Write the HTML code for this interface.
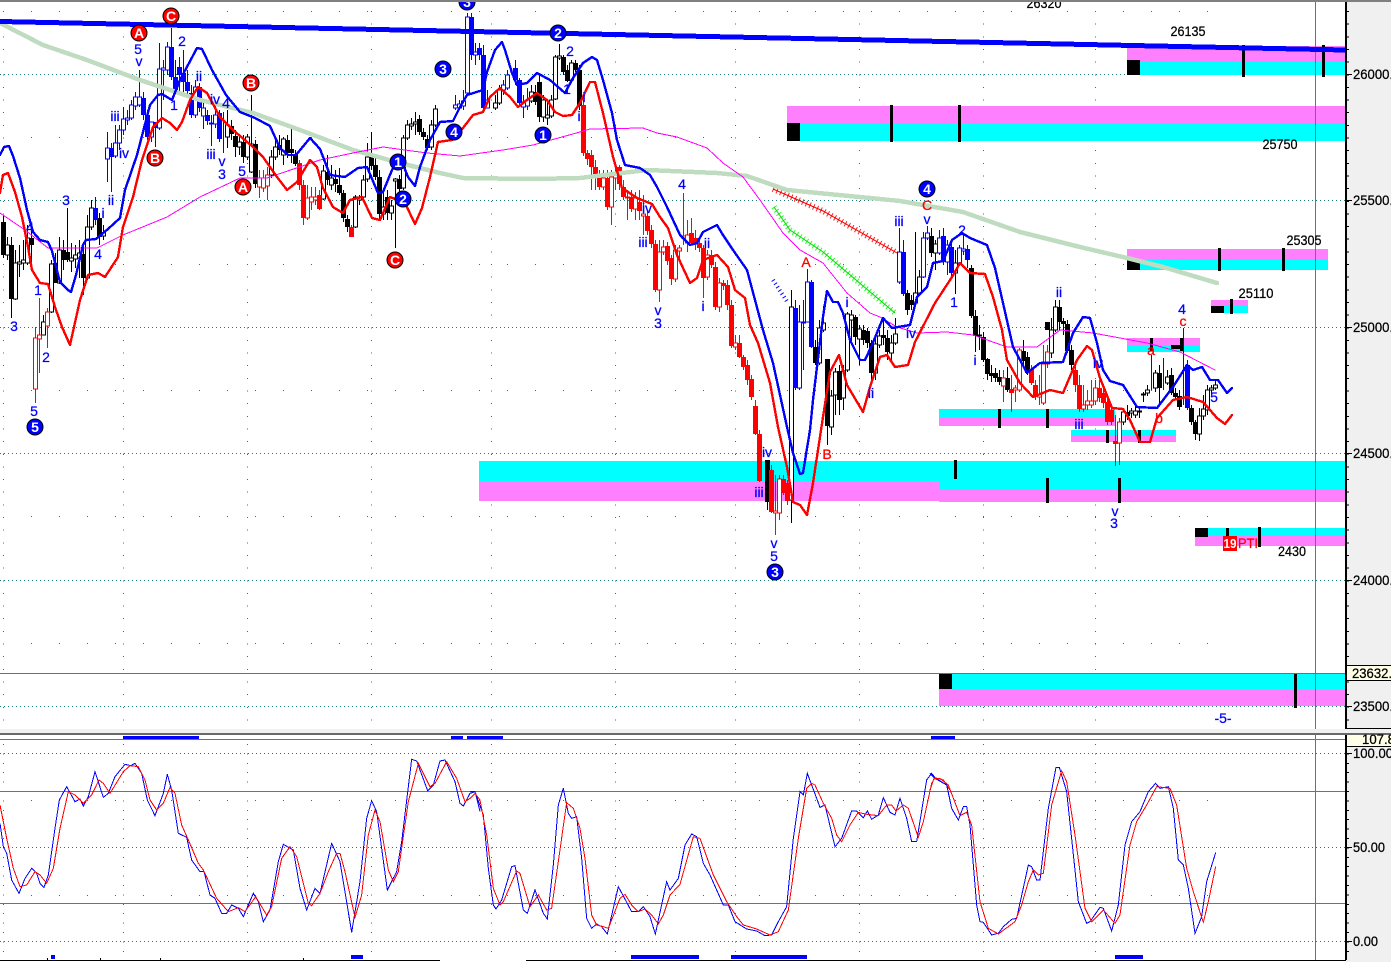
<!DOCTYPE html>
<html><head><meta charset="utf-8"><title>Chart</title>
<style>
html,body{margin:0;padding:0;background:#fff;overflow:hidden}
svg{display:block}
text{font-family:"Liberation Sans",Arial,sans-serif;font-size:14px}
.b{fill:#0000ff;stroke:#0000ff;stroke-width:.25;text-anchor:middle}
.r{fill:#ff0000;stroke:#ff0000;stroke-width:.3;text-anchor:middle}
.k{fill:#000;stroke:#000;stroke-width:.25;text-anchor:middle}
.a{fill:#000;stroke:#000;stroke-width:.25}
.w{fill:#fff;text-anchor:middle;font-weight:bold;font-size:13px}
.c{shape-rendering:crispEdges}
.p{fill:none;stroke-linejoin:round;stroke-linecap:round}
</style></head><body>
<svg width="1391" height="962" viewBox="0 0 1391 962" xmlns="http://www.w3.org/2000/svg">
<rect width="1391" height="962" fill="#fff"/>
<!-- grid -->
<g class="c" fill="none" stroke="#1f7a7a">
<path stroke-dasharray="1 3" d="M0 74.5H1345M0 200.5H1345M0 327.5H1345M0 453.5H1345M0 580.5H1345M0 706.5H1345M0 753.5H1345M0 847.5H1345M0 941.5H1345"/>
<path stroke-dasharray="1 27" d="M31 11.5H1215M31 137.5H1215M31 264.5H1215M31 390.5H1215M31 516.5H1215M31 643.5H1215M31 800.5H1215M31 895.5H1215"/>
<path stroke-dasharray="1 11.65" d="M3.5 11V728M123.5 11V728M247.5 11V728M371.5 11V728M491.5 11V728M615.5 11V728M735.5 11V728M859.5 11V728M983.5 11V728M1095.5 11V728"/>
<path stroke-dasharray="1 8.4" d="M3.5 744V957M123.5 744V957M247.5 744V957M371.5 744V957M491.5 744V957M615.5 744V957M735.5 744V957M859.5 744V957M983.5 744V957M1095.5 744V957"/>
</g>
<!-- bands -->
<g class="c">
<rect x="1127" y="46" width="218" height="15" fill="#ff80ff"/><rect x="1127" y="61" width="218" height="14" fill="#0ff"/><rect x="1127" y="60" width="13" height="15" fill="#000"/>
<rect x="787" y="106" width="558" height="18" fill="#ff80ff"/><rect x="787" y="124" width="558" height="17" fill="#0ff"/><rect x="787" y="123" width="13" height="18" fill="#000"/>
<rect x="1127" y="249" width="201" height="11" fill="#ff80ff"/><rect x="1127" y="260" width="201" height="10" fill="#0ff"/><rect x="1127" y="259" width="13" height="11" fill="#000"/>
<rect x="1211" y="300" width="37" height="6" fill="#ff80ff"/><rect x="1211" y="306" width="37" height="7" fill="#0ff"/><rect x="1211" y="306" width="13" height="7" fill="#000"/>
<rect x="1127" y="338" width="73" height="7" fill="#ff80ff"/><rect x="1127" y="345" width="73" height="7" fill="#0ff"/><rect x="1171" y="345" width="11" height="4" fill="#000"/>
<rect x="939" y="409" width="176" height="8" fill="#0ff"/><rect x="939" y="417" width="176" height="9" fill="#ff80ff"/>
<rect x="1071" y="430" width="105" height="6" fill="#0ff"/><rect x="1071" y="436" width="105" height="6" fill="#ff80ff"/>
<rect x="479" y="461" width="460" height="20" fill="#0ff"/><rect x="479" y="481" width="460" height="20" fill="#ff80ff"/>
<rect x="939" y="461" width="406" height="29" fill="#0ff"/><rect x="939" y="490" width="406" height="12" fill="#ff80ff"/>
<rect x="1195" y="528" width="150" height="8" fill="#0ff"/><rect x="1195" y="536" width="150" height="10" fill="#ff80ff"/><rect x="1195" y="528" width="13" height="9" fill="#000"/>
<rect x="939" y="673" width="406" height="16" fill="#0ff"/><rect x="939" y="689" width="406" height="17" fill="#ff80ff"/><rect x="939" y="673" width="13" height="16" fill="#000"/>
<path fill="none" stroke="#000" stroke-width="3" d="M1243.5 45V77M1323.5 45V77M891.5 105V142M959.5 105V142M1219.5 248V271M1283.5 248V271M1231.5 299V314M1151.5 338V351M1181.5 338V351M999.5 409V428M1047.5 409V428M1107.5 430V443M1139.5 430V443M955.5 460V479M1047.5 478V503M1119.5 478V503M1227.5 528V537M1259.5 527V547M1295.5 673V708"/>
</g>
<!-- olive lines -->
<g class="c" fill="none" stroke="#808000"><path d="M1315.5 2V960M0 673.5H1345M0 739.5H1345M0 791.5H1345M0 903.5H1345"/></g>
<!-- black candles -->
<g class="c" fill="none" stroke="#000">
<path d="M3.5 215V258M7.5 237V260M11.5 237V318M15.5 250V300M19.5 245V277M23.5 240V270M27.5 225V265M31.5 225V265M43.5 315V335M51.5 260V313M55.5 253V283M59.5 237V284M63.5 240V270M67.5 208V262M71.5 243V272M75.5 245V268M79.5 240V278M83.5 243V295M87.5 215V280M91.5 200V230M99.5 213V245M103.5 225V240M227.5 110V148M231.5 120V140M235.5 130V157M239.5 135V155M243.5 135V163M247.5 134V160M251.5 95V173M255.5 140V188M271.5 150V178M275.5 140V160M279.5 135V155M283.5 137V165M287.5 135V158M291.5 128V163M295.5 150V166M323.5 165V200M327.5 155V185M331.5 165V190M335.5 170V192M339.5 168V195M343.5 190V222M347.5 215V232M355.5 195V228M359.5 195V205M363.5 175V198M367.5 143V182M371.5 132V170M375.5 155V180M379.5 170V220M383.5 190V220M387.5 190V220M391.5 200V220M395.5 178V248M399.5 175V195M403.5 135V190M407.5 120V140M411.5 118V130M415.5 112V135M419.5 115V135M423.5 128V140M427.5 135V150M431.5 120V150M435.5 105V127M495.5 95V110M499.5 85V105M531.5 85V103M535.5 85V105M539.5 75V122M543.5 95V122M547.5 100V125M551.5 95V118M555.5 55V100M559.5 44V60M563.5 55V75M567.5 65V82M571.5 60V82M575.5 60V72M579.5 65V110M767.5 460V510M791.5 290V523M815.5 340V365M819.5 320V365M823.5 306V332M827.5 359V445M831.5 390V435M835.5 368V415M839.5 365V415M843.5 365V410M847.5 312V372M851.5 310V345M855.5 315V345M859.5 325V365M863.5 325V345M867.5 328V348M871.5 340V385M875.5 335V380M879.5 330V348M883.5 318V345M887.5 330V360M891.5 335V360M895.5 318V345M907.5 290V315M911.5 295V310M915.5 232V305M919.5 270V295M931.5 228V257M935.5 240V270M955.5 250V294M971.5 265V318M975.5 310V352M979.5 325V350M983.5 332V362M987.5 358V380M991.5 365V382M995.5 368V382M999.5 370V385M1007.5 367V392M1023.5 340V365M1027.5 352V375M1051.5 318V358M1055.5 300V332M1059.5 300V330M1063.5 318V335M1067.5 320V353M1071.5 345V370M1123.5 408V425M1127.5 405V420M1131.5 408V418M1135.5 405V418M1139.5 408V418M1143.5 392V402M1147.5 385V396M1155.5 370V392M1159.5 365V405M1167.5 370V385M1171.5 368V395M1175.5 388V400M1179.5 390V410M1191.5 405V425M1195.5 420V440M1199.5 408V441M1203.5 395V420M1207.5 385V415M1211.5 385V395M1215.5 380V390"/>
<path fill="#fff" d="M5.5 245h4V255h-4zM13.5 263h4V299h-4zM17.5 262h4V264h-4zM21.5 260h4V263h-4zM25.5 238h4V263h-4zM41.5 322h4V335h-4zM49.5 264h4V312h-4zM57.5 250h4V283h-4zM69.5 258h4V261h-4zM73.5 255h4V259h-4zM77.5 253h4V258h-4zM85.5 227h4V278h-4zM89.5 208h4V227h-4zM101.5 233h4V236h-4zM225.5 125h4V137h-4zM237.5 142h4V147h-4zM245.5 137h4V157h-4zM249.5 144h4V172h-4zM269.5 157h4V175h-4zM273.5 147h4V157h-4zM281.5 139h4V155h-4zM321.5 171h4V199h-4zM329.5 178h4V185h-4zM353.5 197h4V227h-4zM357.5 198h4V200h-4zM361.5 180h4V197h-4zM365.5 157h4V179h-4zM381.5 207h4V214h-4zM389.5 206h4V213h-4zM393.5 179h4V181h-4zM401.5 138h4V188h-4zM405.5 125h4V138h-4zM409.5 124h4V126h-4zM413.5 122h4V124h-4zM429.5 125h4V147h-4zM433.5 109h4V125h-4zM493.5 103h4V108h-4zM497.5 90h4V103h-4zM529.5 92h4V101h-4zM541.5 100h4V117h-4zM545.5 115h4V118h-4zM549.5 100h4V116h-4zM553.5 57h4V99h-4zM557.5 56h4V58h-4zM569.5 63h4V80h-4zM789.5 307h4V500h-4zM817.5 328h4V363h-4zM821.5 323h4V330h-4zM829.5 396h4V427h-4zM833.5 372h4V395h-4zM841.5 371h4V398h-4zM845.5 314h4V370h-4zM849.5 315h4V320h-4zM857.5 329h4V339h-4zM873.5 344h4V373h-4zM877.5 336h4V345h-4zM889.5 343h4V353h-4zM893.5 334h4V343h-4zM913.5 293h4V303h-4zM917.5 277h4V293h-4zM933.5 244h4V253h-4zM953.5 263h4V273h-4zM977.5 335h4V336h-4zM1049.5 330h4V353h-4zM1053.5 307h4V330h-4zM1121.5 412h4V422h-4zM1129.5 411h4V413h-4zM1133.5 411h4V415h-4zM1137.5 411h4V412h-4zM1141.5 394h4V395h-4zM1145.5 390h4V393h-4zM1153.5 373h4V388h-4zM1165.5 377h4V383h-4zM1197.5 416h4V434h-4zM1201.5 409h4V416h-4zM1205.5 390h4V410h-4zM1209.5 388h4V390h-4zM1213.5 385h4V388h-4z"/>
<path stroke-width="5" d="M3.5 222V255M11.5 245V299M31.5 238V245M55.5 263V283M63.5 250V260M67.5 252V260M83.5 254V278M99.5 218V237M231.5 126V134M235.5 136V147M243.5 142V157M255.5 144V184M279.5 145V150M287.5 140V153M291.5 149V153M295.5 154V164M327.5 172V180M335.5 179V184M339.5 185V193M343.5 193V218M347.5 219V227M371.5 157V166M375.5 165V177M379.5 177V214M387.5 197V213M399.5 179V189M419.5 119V132M423.5 132V137M427.5 139V148M535.5 92V102M539.5 82V117M563.5 57V72M567.5 70V81M575.5 63V70M579.5 70V106M767.5 460V502M815.5 347V363M827.5 359V426M839.5 371V400M855.5 317V337M863.5 330V340M867.5 331V343M871.5 343V373M883.5 335V338M887.5 338V352M907.5 293V310M911.5 300V305M931.5 236V253M971.5 268V316M975.5 316V336M983.5 337V360M987.5 359V374M991.5 373V376M995.5 373V378M999.5 377V382M1007.5 378V390M1023.5 351V361M1027.5 357V373M1047.5 322V330M1059.5 307V322M1063.5 321V324M1067.5 324V351M1071.5 350V365M1127.5 412V416M1159.5 373V388M1171.5 375V393M1175.5 393V397M1179.5 396V407M1191.5 408V422M1195.5 422V434"/>
</g>
<!-- blue candles -->
<g class="c" fill="none" stroke="#0000ff">
<path d="M95.5 197V225M107.5 132V182M111.5 143V192M115.5 125V158M119.5 125V150M123.5 107V135M127.5 110V125M131.5 100V120M135.5 92V110M139.5 70V107M143.5 92V120M147.5 110V140M151.5 122V142M155.5 122V147M159.5 43V130M163.5 60V100M167.5 42V75M171.5 28V80M175.5 60V93M179.5 57V93M183.5 50V95M187.5 70V95M191.5 85V118M195.5 80V118M199.5 83V112M203.5 100V129M207.5 110V125M211.5 115V146M215.5 105V128M219.5 110V142M223.5 112V153M455.5 95V110M459.5 100V110M463.5 90V110M467.5 13V95M471.5 13V60M475.5 43V65M479.5 43V60M483.5 45V110M487.5 90V108M503.5 80V95M507.5 70V90M515.5 60V85M519.5 78V105M523.5 95V118M527.5 88V110M795.5 300V390M799.5 305V390M803.5 300V370M807.5 269V322M811.5 280V348M899.5 228V284M903.5 240V296M923.5 232V278M927.5 226V240M939.5 230V255M943.5 228V265M947.5 240V275M951.5 240V277M959.5 245V265M963.5 235V255M967.5 245V268M1151.5 355V390M1163.5 358V390M1183.5 328V405M1187.5 360V410"/>
<path fill="#fff" d="M105.5 148h4V159h-4zM113.5 143h4V156h-4zM117.5 130h4V143h-4zM121.5 119h4V130h-4zM125.5 118h4V120h-4zM129.5 105h4V118h-4zM133.5 97h4V106h-4zM137.5 97h4V105h-4zM149.5 122h4V137h-4zM157.5 69h4V128h-4zM161.5 68h4V70h-4zM165.5 47h4V70h-4zM193.5 87h4V115h-4zM201.5 108h4V116h-4zM209.5 123h4V124h-4zM213.5 115h4V124h-4zM453.5 105h4V108h-4zM457.5 104h4V108h-4zM461.5 101h4V106h-4zM465.5 17h4V93h-4zM473.5 52h4V55h-4zM485.5 100h4V108h-4zM501.5 85h4V90h-4zM505.5 75h4V88h-4zM521.5 102h4V107h-4zM525.5 100h4V106h-4zM797.5 322h4V388h-4zM801.5 322h4V323h-4zM805.5 282h4V322h-4zM897.5 252h4V282h-4zM921.5 238h4V277h-4zM925.5 233h4V238h-4zM937.5 238h4V253h-4zM945.5 245h4V262h-4zM957.5 248h4V263h-4zM961.5 249h4V251h-4z"/>
<path stroke-width="5" d="M95.5 208V220M111.5 148V157M143.5 98V115M147.5 115V137M155.5 122V128M171.5 47V77M175.5 77V90M179.5 67V75M183.5 73V82M187.5 82V91M191.5 93V115M199.5 87V108M207.5 115V121M219.5 113V139M471.5 17V55M479.5 48V55M483.5 55V108M515.5 68V80M519.5 80V103M795.5 308V388M811.5 282V347M903.5 252V294M943.5 236V262M951.5 247V273M967.5 249V260M1187.5 365V408"/>
</g>
<!-- red candles -->
<g class="c" fill="none" stroke="#ff0000">
<path d="M35.5 327V403M39.5 298V373M47.5 308V348M259.5 170V198M263.5 170V192M267.5 167V200M299.5 160V190M303.5 180V225M307.5 185V220M311.5 187V210M315.5 187V205M319.5 190V210M351.5 225V237M583.5 100V156M587.5 150V165M591.5 150V190M595.5 160V190M599.5 170V190M603.5 170V190M607.5 170V210M611.5 170V225M615.5 165V190M619.5 165V190M623.5 180V200M627.5 190V220M631.5 190V212M635.5 192V220M639.5 190V220M643.5 195V235M647.5 210V235M651.5 225V248M655.5 240V292M659.5 240V302M663.5 240V255M667.5 242V265M671.5 255V285M675.5 245V282M679.5 245V262M683.5 193V245M687.5 220V252M691.5 218V245M695.5 230V250M699.5 238V252M703.5 245V298M707.5 250V280M711.5 250V268M715.5 262V310M719.5 278V312M723.5 280V290M727.5 280V310M731.5 300V348M735.5 335V350M739.5 335V358M743.5 355V370M747.5 360V385M751.5 375V400M755.5 400V435M759.5 430V482M771.5 465V513M775.5 475V535M779.5 475V520M783.5 475V495M787.5 480V505M1003.5 370V402M1011.5 375V412M1015.5 385V402M1019.5 348V392M1031.5 365V385M1035.5 380V400M1039.5 375V405M1043.5 345V405M1047.5 345V368M1075.5 365V392M1079.5 375V412M1083.5 385V412M1087.5 390V410M1091.5 380V408M1095.5 380V405M1099.5 380V402M1103.5 388V408M1107.5 398V425M1111.5 405V425M1115.5 415V466M1119.5 418V465"/>
<path fill="#fff" d="M33.5 338h4V389h-4zM37.5 335h4V339h-4zM45.5 312h4V326h-4zM257.5 178h4V187h-4zM261.5 178h4V188h-4zM265.5 175h4V186h-4zM305.5 198h4V218h-4zM309.5 197h4V202h-4zM313.5 197h4V200h-4zM601.5 178h4V187h-4zM609.5 177h4V207h-4zM613.5 175h4V178h-4zM625.5 197h4V198h-4zM633.5 198h4V209h-4zM641.5 214h4V216h-4zM657.5 252h4V290h-4zM661.5 247h4V252h-4zM673.5 250h4V279h-4zM677.5 248h4V251h-4zM681.5 236h4V238h-4zM685.5 235h4V243h-4zM705.5 255h4V277h-4zM717.5 283h4V307h-4zM733.5 343h4V347h-4zM773.5 511h4V513h-4zM777.5 479h4V513h-4zM1001.5 378h4V386h-4zM1013.5 388h4V390h-4zM1017.5 350h4V390h-4zM1037.5 394h4V397h-4zM1041.5 364h4V403h-4zM1045.5 352h4V364h-4zM1081.5 405h4V409h-4zM1085.5 401h4V405h-4zM1089.5 401h4V405h-4zM1093.5 388h4V401h-4zM1117.5 422h4V443h-4z"/>
<path stroke-width="5" d="M299.5 163V185M303.5 185V218M319.5 195V209M351.5 227V237M583.5 105V153M587.5 153V159M591.5 155V167M595.5 167V177M599.5 176V187M607.5 178V207M619.5 167V184M623.5 187V197M631.5 197V209M639.5 202V211M647.5 216V231M651.5 230V244M655.5 244V290M667.5 246V261M671.5 258V279M691.5 233V243M695.5 238V243M699.5 243V248M703.5 248V278M711.5 255V265M715.5 267V307M723.5 283V286M727.5 285V305M731.5 305V346M739.5 343V357M743.5 357V367M747.5 365V380M751.5 379V397M755.5 406V434M759.5 434V481M771.5 470V512M783.5 479V493M787.5 483V501M1011.5 389V393M1031.5 369V383M1035.5 385V397M1075.5 370V385M1079.5 385V409M1099.5 388V398M1103.5 393V403M1107.5 402V422M1111.5 410V422M1115.5 441V444"/>
</g>
<!-- trend marks -->
<path fill="none" stroke="#ff2020" stroke-width="6" stroke-dasharray="1 3" d="M773 189L823 211L897 253"/>
<path fill="none" stroke="#e00" stroke-width="1" d="M773 189L823 211L897 253"/>
<path fill="none" stroke="#20ff20" stroke-width="6" stroke-dasharray="1 3" d="M774 207L790 230L823 252L895 313"/>
<path fill="none" stroke="#10d010" stroke-width="1" d="M774 207L790 230L823 252L895 313"/>
<path fill="none" stroke="#0000ff" stroke-width="4" stroke-dasharray="1 3" d="M773 280L788 303"/>
<!-- green MA -->
<polyline class="p c" stroke="#c0dcc0" stroke-width="4.5" points="0,23 43,45 87,60 140,80 200,100 253,113 300,130 353,150 400,163 440,173 463,178 533,179 580,178 647,170 717,173 747,176 787,190 880,199 900,201 963,212 1020,232 1080,247 1127,258 1163,267 1217,283"/>
<!-- magenta MA -->
<polyline class="p c" stroke="#ff00ff" stroke-width="1" points="0,213 25,230 48,248 97,248 123,235 167,217 200,197 240,178 267,178 320,160 353,153 383,147 427,153 460,156 503,150 533,145 580,132 590,129 643,128 657,133 677,137 707,148 723,163 743,177 760,200 783,233 800,250 823,263 847,293 870,313 880,317 897,327 917,333 947,332 973,335 1007,347 1037,347 1060,330 1093,333 1147,343 1180,352 1215,370"/>
<!-- red band -->
<polyline class="p c" stroke="#ff0000" stroke-width="2.4" points="0,193 3,175 8,173 15,192 22,217 28,247 32,270 40,283 48,284 55,307 62,327 70,345 80,300 88,275 98,273 105,277 118,257 123,227 133,197 142,160 153,127 162,118 170,123 177,130 182,122 190,100 198,87 207,93 220,117 233,130 253,147 263,157 277,177 287,190 297,182 310,160 317,167 323,188 333,207 343,213 350,200 362,197 372,218 380,220 390,197 405,203 415,224 422,208 430,177 438,142 452,140 463,128 473,115 483,112 490,97 500,88 510,97 518,107 527,100 537,93 547,100 555,112 563,116 572,115 580,103 590,82 595,82 603,113 613,157 622,188 637,198 652,204 660,217 668,228 677,255 690,283 697,278 703,260 717,255 728,267 735,290 745,298 750,325 758,343 770,383 778,427 787,467 793,502 800,505 807,515 813,483 823,417 830,372 839,355 847,385 863,412 870,387 880,357 887,355 895,367 908,365 915,342 935,303 952,277 960,263 970,273 985,274 993,297 1002,330 1007,360 1020,383 1033,397 1050,390 1063,393 1077,360 1087,346 1092,350 1100,378 1112,408 1123,409 1130,420 1140,442 1150,442 1157,418 1173,400 1187,397 1203,402 1217,418 1225,424 1232,415"/>
<!-- blue band -->
<polyline class="p c" stroke="#0000ff" stroke-width="2.4" points="0,155 4,147 9,146 13,156 20,178 27,210 33,232 40,240 48,242 52,251 60,282 68,290 71,292 76,275 83,245 86,240 96,239 108,229 120,218 125,190 137,155 150,105 158,95 162,94 172,100 180,80 197,48 202,49 212,70 226,95 240,112 255,118 270,126 280,148 288,155 296,155 310,138 320,149 330,175 345,177 358,168 367,167 378,193 383,192 392,170 400,157 408,177 415,186 420,167 430,140 440,122 453,121 460,107 467,95 483,90 487,72 495,50 502,42 505,50 512,73 517,85 527,83 537,73 550,80 565,93 573,78 583,63 592,57 597,60 603,80 612,113 617,140 625,165 640,168 650,175 657,187 667,207 680,235 690,245 697,243 703,232 717,225 723,235 733,250 747,270 763,330 773,363 787,427 793,453 800,474 803,473 810,430 813,400 823,317 827,291 833,302 838,302 843,313 850,340 860,360 865,360 872,345 883,318 892,328 910,325 917,297 927,287 933,263 943,261 952,240 962,233 970,238 987,245 995,268 1003,303 1013,347 1027,373 1040,363 1063,362 1073,333 1083,317 1090,318 1097,343 1103,370 1110,381 1123,385 1137,407 1157,408 1173,387 1187,365 1193,370 1202,367 1210,380 1218,380 1227,393 1232,388"/>
<!-- thick trendline -->
<path class="c" fill="none" stroke="#0000ff" stroke-width="5" d="M0 21.5L1345 50"/>
<!-- labels blue -->
<g class="b">
<text x="138" y="54">5</text><text x="139" y="66">v</text><text x="182" y="46">2</text><text x="199" y="81">ii</text><text x="174" y="110">1</text><text x="115" y="121">iii</text><text x="124" y="158">iv</text><text x="215" y="104">iv</text><text x="226" y="108">4</text><text x="211" y="159">iii</text><text x="222" y="166">v</text><text x="222" y="179">3</text><text x="242" y="176">5</text><text x="66" y="205">3</text><text x="103" y="218">i</text><text x="111" y="205">ii</text><text x="98" y="259">4</text><text x="38" y="295">1</text><text x="46" y="362">2</text><text x="14" y="331">3</text><text x="34" y="416">5</text><text x="30" y="232">4</text>
<text x="570" y="56">2</text><text x="584" y="102">i</text><text x="579" y="121">i</text><text x="567" y="94">1</text><text x="647" y="213">iv</text><text x="643" y="247">iii</text><text x="658" y="315">v</text><text x="658" y="328">3</text><text x="682" y="189">4</text><text x="707" y="248">ii</text><text x="703" y="311">i</text><text x="847" y="307">i</text><text x="899" y="226">iii</text><text x="927" y="224">v</text><text x="962" y="235">2</text><text x="954" y="307">1</text><text x="911" y="338">iv</text><text x="975" y="365">i</text><text x="1059" y="297">ii</text><text x="1098" y="368">iv</text><text x="1079" y="429">iii</text><text x="1182" y="314">4</text><text x="1214" y="402">5</text><text x="1115" y="516">v</text><text x="1114" y="528">3</text><text x="767" y="457">iv</text><text x="759" y="497">iii</text><text x="774" y="548">v</text><text x="774" y="561">5</text><text x="871" y="398">ii</text><text x="1223" y="723">-5-</text>
</g>
<g class="r">
<text x="927" y="210">C</text><text x="1183" y="326">c</text><text x="1151" y="355">a</text><text x="1159" y="423">b</text><text x="806" y="267">A</text><text x="827" y="459">B</text>
</g>
<g class="k">
<text x="1044" y="8" textLength="35" lengthAdjust="spacingAndGlyphs">26320</text><text x="1188" y="36" textLength="35" lengthAdjust="spacingAndGlyphs">26135</text><text x="1280" y="149" textLength="35" lengthAdjust="spacingAndGlyphs">25750</text><text x="1304" y="245" textLength="35" lengthAdjust="spacingAndGlyphs">25305</text><text x="1256" y="298" textLength="35" lengthAdjust="spacingAndGlyphs">25110</text><text x="1292" y="556" textLength="28" lengthAdjust="spacingAndGlyphs">2430</text>
</g>
<!-- 19 PTI -->
<rect class="c" x="1223" y="536" width="14" height="15" fill="#ff0000"/>
<text class="w" x="1230" y="548" textLength="13" lengthAdjust="spacingAndGlyphs">19</text>
<text x="1238" y="548" fill="#ff0000" stroke="#ff0000" stroke-width=".25" textLength="20" lengthAdjust="spacingAndGlyphs">PTI</text>
<!-- circles -->
<g fill="#0000ff" stroke="#000" stroke-width="1">
<circle cx="35" cy="427" r="8"/><circle cx="775" cy="572" r="8"/><circle cx="927" cy="189" r="8"/><circle cx="443" cy="69" r="8"/><circle cx="454" cy="132" r="8"/><circle cx="398" cy="162" r="8"/><circle cx="403" cy="199" r="8"/><circle cx="467" cy="2" r="8"/><circle cx="558" cy="33" r="8"/><circle cx="543" cy="135" r="8"/>
</g>
<g fill="#ff0000" stroke="#000" stroke-width="1">
<circle cx="139" cy="33" r="8"/><circle cx="171" cy="16" r="8"/><circle cx="155" cy="158" r="8"/><circle cx="251" cy="83" r="8"/><circle cx="243" cy="187" r="8"/><circle cx="395" cy="260" r="8"/>
</g>
<g class="w">
<text x="35" y="432">5</text><text x="775" y="577">3</text><text x="927" y="194">4</text><text x="443" y="74">3</text><text x="454" y="137">4</text><text x="398" y="167">1</text><text x="403" y="204">2</text><text x="467" y="7">3</text><text x="558" y="38">2</text><text x="543" y="140">1</text>
<text x="139" y="38">A</text><text x="171" y="21">C</text><text x="155" y="163">B</text><text x="251" y="88">B</text><text x="243" y="192">A</text><text x="395" y="265">C</text>
</g>
<!-- divider -->
<rect x="0" y="729" width="1391" height="4" fill="#f0f0f0"/>
<rect x="0" y="733" width="1391" height="2" fill="#696969"/>
<rect x="0" y="0" width="1391" height="2" fill="#808080"/>
<!-- blue markers -->
<g class="c" fill="#0000ff">
<rect x="123" y="736" width="76" height="3"/><rect x="451" y="736" width="12" height="3"/><rect x="467" y="736" width="36" height="3"/><rect x="931" y="736" width="24" height="3"/>
<rect x="51" y="955" width="4" height="4"/><rect x="351" y="955" width="12" height="4"/><rect x="631" y="955" width="68" height="4"/><rect x="731" y="955" width="76" height="4"/><rect x="1115" y="955" width="28" height="4"/>
</g>
<!-- stochastic -->
<g transform="translate(0,725) scale(.33333)" fill="none" stroke-width="3" class="c">
<polyline stroke="#0000ff" points="0,295 10,365 20,385 35,465 57,505 75,460 95,430 110,445 120,475 132,487 145,450 165,310 178,225 200,185 225,230 240,222 250,243 265,215 285,140 310,217 325,205 345,155 375,118 392,122 405,115 425,145 442,225 465,272 490,205 502,148 515,195 535,325 560,337 575,405 600,440 612,440 630,510 645,520 665,565 680,565 695,540 715,550 730,575 760,505 775,530 790,590 810,555 835,410 850,358 880,375 900,490 920,555 945,490 960,505 995,355 1020,410 1055,622 1080,470 1100,280 1115,227 1130,260 1162,495 1190,440 1205,350 1235,103 1250,108 1283,197 1300,180 1320,108 1335,105 1365,170 1380,235 1390,243 1410,205 1425,200 1440,260"/>
<polyline stroke="#ff0000" points="0,240 20,340 40,430 60,485 80,480 105,440 120,450 140,475 160,430 180,310 205,200 225,210 250,235 275,210 297,165 310,175 330,205 370,140 390,122 415,125 435,165 450,225 470,255 490,235 510,187 525,205 545,300 565,345 595,415 610,435 650,520 685,560 715,548 735,560 767,515 800,570 815,545 845,400 870,365 890,395 925,535 935,542 960,505 985,440 1010,385 1020,385 1035,440 1065,577 1085,510 1105,330 1125,255 1140,290 1165,435 1180,470 1195,440 1225,230 1255,115 1290,185 1305,175 1340,110 1370,160 1395,230 1410,220"/>
</g>
<g transform="translate(470,725) scale(.33333)" fill="none" stroke-width="3" class="c">
<polyline stroke="#0000ff" points="0,200 15,200 40,270 55,430 70,540 78,552 95,525 125,425 135,422 160,555 172,565 195,495 220,565 232,582 250,420 265,240 280,190 295,265 305,280 320,275 335,400 350,580 365,610 380,597 395,605 412,627 445,485 485,560 505,560 520,545 540,575 556,627 590,470 600,495 625,460 645,360 665,327 680,335 700,415 720,450 760,540 775,540 795,590 830,612 860,618 885,632 905,630 925,590 950,545 970,340 990,200 1000,210 1012,145 1050,247 1065,240 1095,365 1115,340 1145,258 1160,258 1180,278 1192,258 1205,283 1225,270 1240,218 1260,262 1275,270 1290,220 1310,280 1325,350 1340,350 1370,165 1385,145 1395,158 1430,180 1440,225"/>
<polyline stroke="#ff0000" points="0,220 15,205 30,225 50,330 70,490 90,540 100,530 140,438 150,445 180,545 205,510 230,555 245,550 290,233 310,250 330,310 345,400 365,570 380,600 400,605 415,610 450,520 465,508 485,540 505,560 525,552 545,570 565,597 580,570 600,510 630,478 670,335 690,340 730,450 770,530 800,575 820,600 860,612 900,630 925,620 955,555 985,340 1010,190 1025,175 1035,180 1060,235 1085,280 1100,330 1115,350 1140,300 1165,262 1190,268 1225,272 1250,240 1265,240 1278,258 1300,240 1315,250 1345,337 1360,290 1385,175 1395,158 1420,165 1440,195"/>
</g>
<g transform="translate(930,725) scale(.33333)" fill="none" stroke-width="3" class="c">
<polyline stroke="#0000ff" points="0,145 15,160 50,180 65,250 85,285 100,245 110,245 120,300 140,540 150,590 160,592 185,630 205,625 220,605 245,583 260,580 295,420 305,425 320,465 330,465 355,250 378,127 388,127 410,200 445,530 470,595 480,590 510,547 520,550 545,618 565,540 585,360 605,290 630,260 655,200 677,175 690,190 715,185 730,250 745,405 760,420 775,490 795,625 815,575 830,470 857,383"/>
<polyline stroke="#ff0000" points="0,195 12,160 30,160 55,180 90,272 110,262 125,300 150,530 175,610 205,627 255,590 275,540 295,470 310,435 325,450 340,445 365,240 395,137 410,170 435,330 465,550 485,590 520,555 555,595 570,570 600,360 620,290 650,240 680,185 720,190 740,240 770,430 790,500 820,592 835,530 857,425"/>
</g>
<!-- bottom axis -->
<path class="c" fill="none" stroke="#000" d="M0 960.5H440M526 960.5H1346M47.5 958V960M100.5 958V960M160.5 958V960M303.5 958V960"/>
<!-- right axis -->
<rect class="c" x="1346" y="2" width="45" height="727" fill="#f0f0f0"/>
<rect class="c" x="1346" y="735" width="45" height="227" fill="#f0f0f0"/>
<rect class="c" x="1345" y="2" width="2" height="727" fill="#000"/>
<rect class="c" x="1345" y="735" width="2" height="225" fill="#000"/>
<rect class="c" x="1345" y="728" width="46" height="1" fill="#000"/>
<g class="c" fill="none" stroke="#000" stroke-width="2">
<path stroke-dasharray="1 11.65" d="M1348 11V728"/>
<path stroke-dasharray="1 8.4" d="M1348 744V957"/>
</g>
<path class="c" fill="none" stroke="#000" d="M1347 74.5H1352M1347 200.5H1352M1347 327.5H1352M1347 453.5H1352M1347 580.5H1352M1347 706.5H1352M1347 753.5H1352M1347 847.5H1352M1347 941.5H1352"/>
<g class="a">
<text x="1353" y="79" textLength="40" lengthAdjust="spacingAndGlyphs">26000.</text><text x="1353" y="205" textLength="40" lengthAdjust="spacingAndGlyphs">25500.</text><text x="1353" y="332" textLength="40" lengthAdjust="spacingAndGlyphs">25000.</text><text x="1353" y="458" textLength="40" lengthAdjust="spacingAndGlyphs">24500.</text><text x="1353" y="585" textLength="40" lengthAdjust="spacingAndGlyphs">24000.</text><text x="1353" y="711" textLength="40" lengthAdjust="spacingAndGlyphs">23500.</text>
<text x="1353" y="758" textLength="40" lengthAdjust="spacingAndGlyphs">100.00</text><text x="1353" y="852" textLength="32" lengthAdjust="spacingAndGlyphs">50.00</text><text x="1353" y="946" textLength="25" lengthAdjust="spacingAndGlyphs">0.00</text>
</g>
<rect class="c" x="1347" y="666" width="44" height="14" fill="#ffffe8"/>
<path class="c" fill="none" stroke="#000" d="M1346 665.5H1391M1346 680.5H1391"/>
<text class="a" x="1352" y="678" textLength="40" lengthAdjust="spacingAndGlyphs">23632.</text>
<rect class="c" x="1347" y="735" width="44" height="11" fill="#ffffe8"/>
<path class="c" fill="none" stroke="#000" d="M1346 746.5H1391"/>
<text class="a" x="1362" y="744" textLength="33" lengthAdjust="spacingAndGlyphs">107.8</text>
</svg>
</body></html>
